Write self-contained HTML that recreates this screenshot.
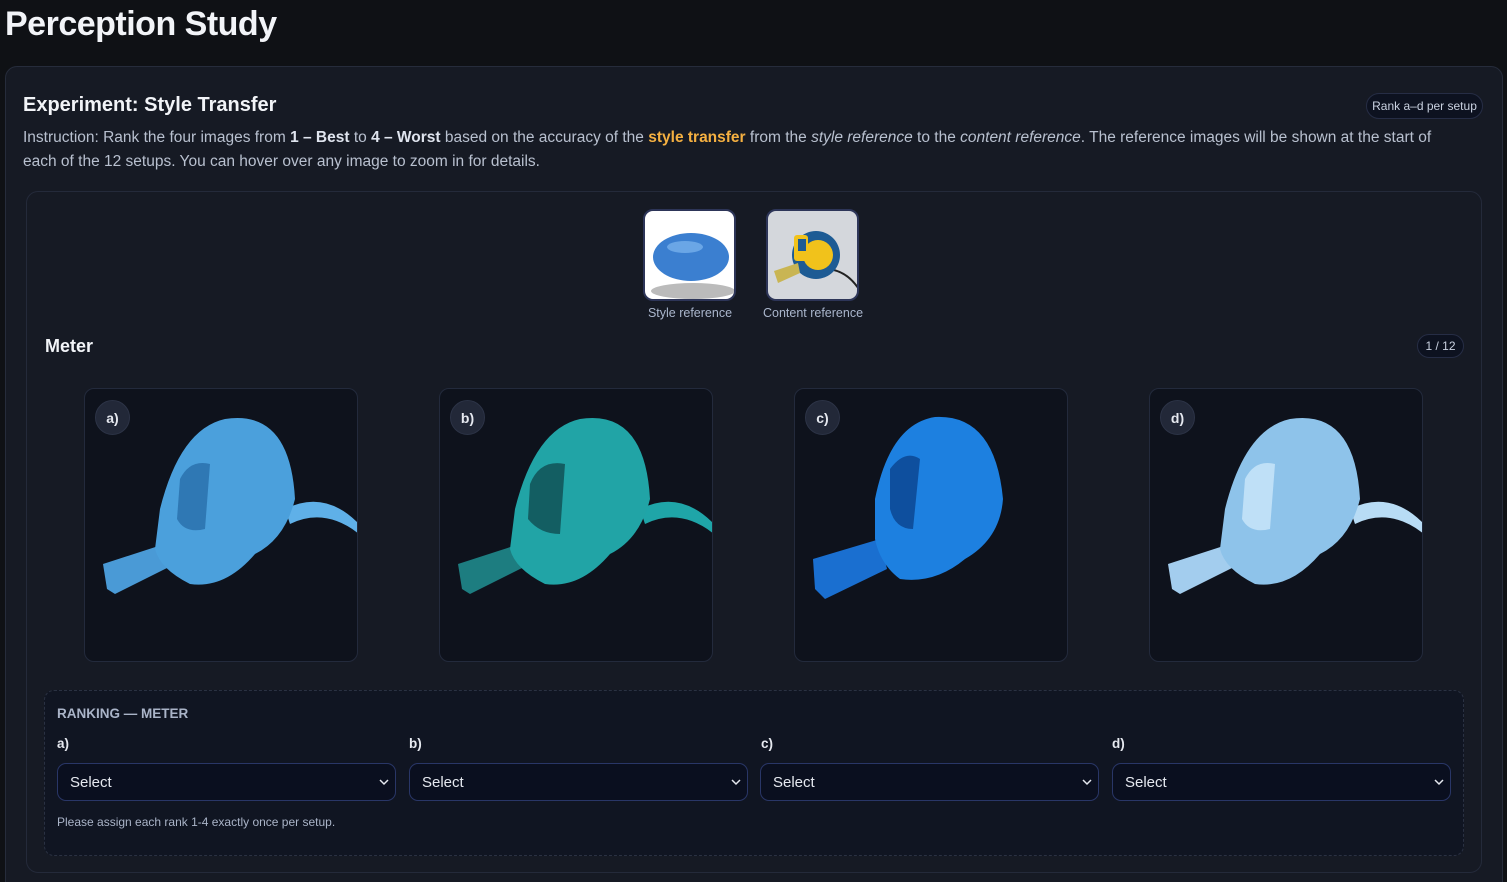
<!DOCTYPE html>
<html><head><meta charset="utf-8"><style>
*{box-sizing:border-box;margin:0;padding:0}
html,body{width:1507px;height:882px;overflow:hidden}
body{background:#0f1115;font-family:"Liberation Sans",sans-serif;color:#e6e9f0;position:relative}
.abs{position:absolute}
h1{position:absolute;left:5px;top:5px;font-size:34px;font-weight:bold;color:#f2f4f8;letter-spacing:-0.5px}
.card{left:5px;top:66px;width:1498px;height:830px;background:#161a24;border:1px solid #262c3b;border-radius:12px}
.t2{left:23px;top:94px;font-size:20px;font-weight:bold;color:#f2f4f8}
.instr{left:23px;top:126px;width:1440px;font-size:15.5px;line-height:24px;color:#b8c0cf}
.instr b{color:#dfe4ee}
.instr .o{color:#f5b041}
.pill{border:1px solid #262d45;background:#0d1220;border-radius:14px;font-size:12px;color:#c9d1e0;display:flex;align-items:center;justify-content:center}
.inner{left:26px;top:191px;width:1456px;height:682px;border:1px solid #242a3a;border-radius:12px;background:#161a24}
.ref{width:93px;height:92px;border:2px solid #2d3558;border-radius:10px;overflow:hidden}
.cap{font-size:12.5px;color:#aab6cc;text-align:center}
.img{top:388px;width:274px;height:274px;background:#0e121c;border:1px solid #232a3c;border-radius:10px;overflow:hidden}
.lab{position:absolute;left:10px;top:11px;width:35px;height:35px;border-radius:50%;background:#222838;color:#e6e9f0;font-size:14px;font-weight:bold;display:flex;align-items:center;justify-content:center;border:1px solid #2c3346}
.rank{left:44px;top:690px;width:1420px;height:166px;border:1px dashed #2a3142;border-radius:10px;background:#101522}
.sel{top:763px;width:339px;height:38px;border:1px solid #293667;border-radius:9px;background:#0a0f1f;color:#e6e9f0;font-size:15px;padding-left:12px;display:flex;align-items:center}
.sel svg{position:absolute;right:6px;top:14px}
.ll{top:736px;font-size:13.5px;font-weight:bold;color:#e6e9f0}
</style></head><body>
<h1>Perception Study</h1>
<div class="abs card"></div>
<div class="abs t2">Experiment: Style Transfer</div>
<div class="abs pill" style="left:1366px;top:93px;width:117px;height:26px">Rank a–d per setup</div>
<div class="abs instr">Instruction: Rank the four images from <b>1 – Best</b> to <b>4 – Worst</b> based on the accuracy of the <b class="o">style transfer</b> from the <i>style reference</i> to the <i>content reference</i>. The reference images will be shown at the start of each of the 12 setups. You can hover over any image to zoom in for details.</div>
<div class="abs inner"></div>
<div class="abs ref" style="left:643px;top:209px;background:#fff"><svg width="93" height="92"><ellipse cx="48" cy="80" rx="42" ry="8" fill="#bbb"/><ellipse cx="46" cy="46" rx="38" ry="24" fill="#3b7fd0"/><ellipse cx="40" cy="36" rx="18" ry="6" fill="#6aa6e6"/></svg></div>
<div class="abs ref" style="left:766px;top:209px;background:#d4d7dc"><svg width="93" height="92"><path d="M60 58 Q80 60 92 80" stroke="#222" stroke-width="2" fill="none"/><circle cx="48" cy="44" r="24" fill="#1d5b94"/><circle cx="50" cy="44" r="15" fill="#f1c21b"/><rect x="26" y="24" width="14" height="26" rx="3" fill="#f1c21b"/><rect x="30" y="28" width="8" height="12" fill="#1d5b94"/><path d="M6 60 L30 52 L32 62 L10 72Z" fill="#c9b553"/></svg></div>
<div class="abs cap" style="left:640px;top:306px;width:100px">Style reference</div>
<div class="abs cap" style="left:753px;top:306px;width:120px">Content reference</div>
<div class="abs" style="left:45px;top:336px;font-size:18px;font-weight:bold;color:#f2f4f8">Meter</div>
<div class="abs pill" style="left:1417px;top:334px;width:47px;height:24px">1 / 12</div>

<div class="abs img" style="left:84px"><svg width="274" height="274"><path d="M200 120 Q240 100 274 135 L274 145 Q240 118 205 135Z" fill="#5fb0e8"/><path d="M18 175 L95 150 L100 170 L30 205 L22 200Z" fill="#4a9ad6"/><path d="M75 120 Q95 40 140 30 Q205 20 210 110 Q200 150 170 165 Q140 200 105 195 Q75 180 70 160Z" fill="#4ba0dc"/><path d="M95 90 Q105 70 125 75 L120 140 Q100 145 92 130Z" fill="#2f78b4"/></svg><div class="lab">a)</div></div>
<div class="abs img" style="left:439px"><svg width="274" height="274"><path d="M200 120 Q240 100 274 135 L274 145 Q240 118 205 135Z" fill="#1fa5a8"/><path d="M18 175 L95 150 L100 170 L30 205 L22 200Z" fill="#1d7d80"/><path d="M75 120 Q95 40 140 30 Q205 20 210 110 Q200 150 170 165 Q140 200 105 195 Q75 180 70 160Z" fill="#21a4a6"/><path d="M90 95 Q100 70 125 75 L120 145 Q100 145 88 130Z" fill="#135e62"/></svg><div class="lab">b)</div></div>
<div class="abs img" style="left:794px"><svg width="274" height="274"><path d="M18 170 L85 150 L92 180 L30 210 L20 200Z" fill="#1a6fd0"/><path d="M80 110 Q95 35 140 28 Q200 25 208 110 Q205 150 170 170 Q140 195 105 190 Q85 175 80 150Z" fill="#1d80e0"/><path d="M95 80 Q110 60 125 70 L118 140 Q100 140 95 120Z" fill="#0e4f9e"/></svg><div class="lab">c)</div></div>
<div class="abs img" style="left:1149px"><svg width="274" height="274"><path d="M200 120 Q240 100 274 135 L274 145 Q240 118 205 135Z" fill="#b8dcf5"/><path d="M18 175 L95 150 L100 170 L30 205 L22 200Z" fill="#a3cdee"/><path d="M75 120 Q95 40 140 30 Q205 20 210 110 Q200 150 170 165 Q140 200 105 195 Q75 180 70 160Z" fill="#8ec3ea"/><path d="M95 90 Q105 70 125 75 L120 140 Q100 145 92 130Z" fill="#bfe0f7"/></svg><div class="lab">d)</div></div>

<div class="abs rank"></div>
<div class="abs" style="left:57px;top:706px;font-size:13.5px;font-weight:bold;color:#aab4c8">RANKING — METER</div>
<div class="abs ll" style="left:57px">a)</div>
<div class="abs ll" style="left:409px">b)</div>
<div class="abs ll" style="left:761px">c)</div>
<div class="abs ll" style="left:1112px">d)</div>
<div class="abs sel" style="left:57px">Select<svg width="10" height="8"><path d="M1 2 L5 6 L9 2" stroke="#e6e9f0" stroke-width="1.5" fill="none"/></svg></div>
<div class="abs sel" style="left:409px">Select<svg width="10" height="8"><path d="M1 2 L5 6 L9 2" stroke="#e6e9f0" stroke-width="1.5" fill="none"/></svg></div>
<div class="abs sel" style="left:760px">Select<svg width="10" height="8"><path d="M1 2 L5 6 L9 2" stroke="#e6e9f0" stroke-width="1.5" fill="none"/></svg></div>
<div class="abs sel" style="left:1112px">Select<svg width="10" height="8"><path d="M1 2 L5 6 L9 2" stroke="#e6e9f0" stroke-width="1.5" fill="none"/></svg></div>
<div class="abs" style="left:57px;top:815px;font-size:12px;color:#aab4c8">Please assign each rank 1-4 exactly once per setup.</div>
</body></html>
